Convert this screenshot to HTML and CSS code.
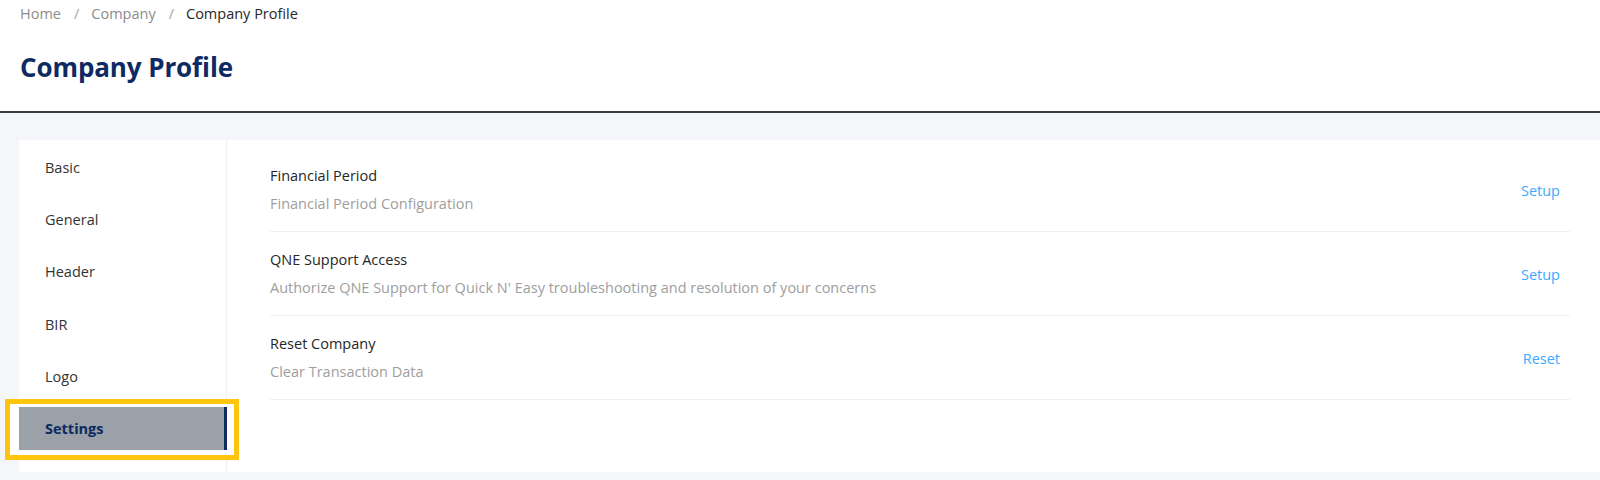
FILE: index.html
```html
<!DOCTYPE html>
<html lang="en">
<head>
<meta charset="utf-8">
<title>Company Profile</title>
<link rel="stylesheet" href="styles.css">
</head>
<body>
<div class="page">
  <header class="page-header">
    <nav class="breadcrumb">
      <span class="crumb">Home</span>
      <span class="sep">/</span>
      <span class="crumb">Company</span>
      <span class="sep">/</span>
      <span class="crumb current">Company Profile</span>
    </nav>
    <h1 class="page-title">Company Profile</h1>
  </header>
  <main class="page-body">
    <section class="card">
      <aside class="side-menu">
        <div class="menu-item">Basic</div>
        <div class="menu-item">General</div>
        <div class="menu-item">Header</div>
        <div class="menu-item">BIR</div>
        <div class="menu-item">Logo</div>
        <div class="menu-item active">Settings</div>
      </aside>
      <div class="content">
        <ul class="settings-list">
          <li class="setting-row">
            <div class="setting-text">
              <div class="setting-title">Financial Period</div>
              <div class="setting-desc">Financial Period Configuration</div>
            </div>
            <a class="setting-action">Setup</a>
          </li>
          <li class="setting-row">
            <div class="setting-text">
              <div class="setting-title">QNE Support Access</div>
              <div class="setting-desc">Authorize QNE Support for Quick N' Easy troubleshooting and resolution of your concerns</div>
            </div>
            <a class="setting-action">Setup</a>
          </li>
          <li class="setting-row">
            <div class="setting-text">
              <div class="setting-title">Reset Company</div>
              <div class="setting-desc">Clear Transaction Data</div>
            </div>
            <a class="setting-action">Reset</a>
          </li>
        </ul>
      </div>
    </section>
  </main>
</div>
</body>
</html>
```
FILE: styles.css
```css
* { box-sizing: border-box; }
html, body { margin: 0; padding: 0; }
body {
  font-family: "Open Sans", "Noto Sans", sans-serif;
  font-size: 14.5px;
  color: #262626;
  background: #fff;
}
.page {
  height: 480px;
  display: flex;
  flex-direction: column;
}
.page-header {
  padding: 3px 20px 26px;
  border-bottom: 2px solid #3c3c3c;
}
.breadcrumb {
  display: flex;
  align-items: center;
  line-height: 22px;
  font-size: 14.5px;
  color: #8c8c8c;
}
.sep {
  padding: 0 12px 0 13px;
  color: #a6a6a6;
}
.crumb.current { color: #262626; }
.page-title {
  margin: 24px 0 0;
  font-size: 26px;
  line-height: 36px;
  font-weight: 700;
  color: #0d2a62;
  letter-spacing: -0.1px;
}
.page-body {
  flex: 1;
  background: #f5f6fa;
  padding: 27px 0 8px 19px;
  display: flex;
}
.card {
  flex: 1;
  background: #fff;
  display: flex;
}
.side-menu {
  position: relative;
  z-index: 0;
  width: 208px;
  flex: none;
  border-right: 1px solid #f0f0f0;
  padding-top: 5.5px;
}
.menu-item {
  height: 43px;
  line-height: 43px;
  padding-left: 26px;
  margin-bottom: 9.4px;
  color: #333;
}
.menu-item.active {
  position: relative;
  background: #9aa1a9;
  color: #0d2a62;
  font-weight: 700;
  border-right: 3px solid #0d2a62;
  margin-right: -1px;
}
.menu-item.active::before {
  content: "";
  position: absolute;
  left: -14px;
  top: -8px;
  right: -15px;
  bottom: -10px;
  border: 5px solid #ffc50d;
  background: #fff;
  z-index: -1;
}
.content {
  flex: 1;
  padding: 8px 30px 0 43px;
}
.settings-list {
  list-style: none;
  margin: 0;
  padding: 0;
}
.setting-row {
  display: flex;
  align-items: center;
  justify-content: space-between;
  padding: 16px 10px 15px 0;
  border-bottom: 1px solid #f0f0f0;
}
.setting-title {
  line-height: 24px;
  color: #262626;
}
.setting-desc {
  margin-top: 4px;
  line-height: 24px;
  color: #9e9e9e;
}
.setting-action {
  color: #40a9ff;
  cursor: pointer;
}
```
